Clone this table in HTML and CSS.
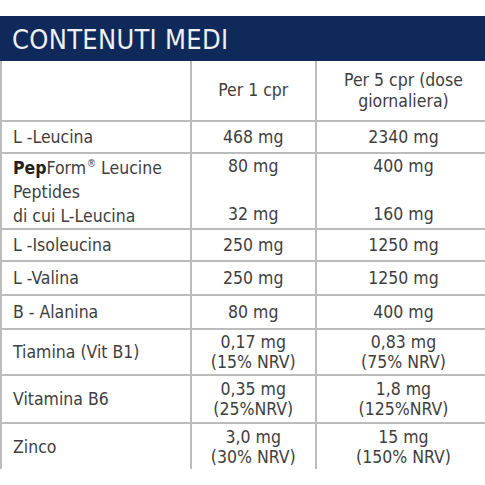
FILE: index.html
```html
<!DOCTYPE html>
<html lang="it">
<head>
  <meta charset="UTF-8" />
  <meta name="viewport" content="width=device-width, initial-scale=1.0"/>
  <title>Contenuti medi</title>
  <link rel="stylesheet" href="styles.css">
</head>
<body>
  <div class="panel">
    <h1 class="panel-title">CONTENUTI MEDI</h1>

    <table class="nutri">
      <colgroup>
        <col class="col-name">
        <col class="col-one">
        <col class="col-five">
      </colgroup>
      <tr class="row-head">
        <td></td>
        <td class="val">Per 1 cpr</td>
        <td class="val">Per 5 cpr (dose<br>giornaliera)</td>
      </tr>
      <tr class="row-s">
        <td>L -Leucina</td>
        <td class="val">468 mg</td>
        <td class="val">2340 mg</td>
      </tr>
      <tr class="row-pep">
        <td><b>Pep</b>Form<sup>&reg;</sup> Leucine<br>Peptides<br>di cui L-Leucina</td>
        <td class="val">80 mg<br>&nbsp;<br>32 mg</td>
        <td class="val">400 mg<br>&nbsp;<br>160 mg</td>
      </tr>
      <tr class="row-s">
        <td>L -Isoleucina</td>
        <td class="val">250 mg</td>
        <td class="val">1250 mg</td>
      </tr>
      <tr class="row-m">
        <td>L -Valina</td>
        <td class="val">250 mg</td>
        <td class="val">1250 mg</td>
      </tr>
      <tr class="row-m">
        <td>B - Alanina</td>
        <td class="val">80 mg</td>
        <td class="val">400 mg</td>
      </tr>
      <tr class="row-l">
        <td>Tiamina (Vit B1)</td>
        <td class="val">0,17 mg<br>(15% NRV)</td>
        <td class="val">0,83 mg<br>(75% NRV)</td>
      </tr>
      <tr class="row-xl">
        <td>Vitamina B6</td>
        <td class="val">0,35 mg<br>(25%NRV)</td>
        <td class="val">1,8 mg<br>(125%NRV)</td>
      </tr>
      <tr class="row-l last">
        <td>Zinco</td>
        <td class="val">3,0 mg<br>(30% NRV)</td>
        <td class="val">15 mg<br>(150% NRV)</td>
      </tr>
    </table>
  </div>
</body>
</html>
```

FILE: styles.css
```css
html, body {
  margin: 0;
  background-color: #fff;
  overflow: hidden;
}

body {
  font-family: 'DejaVu Sans Condensed', 'DejaVu Sans', sans-serif;
  color: #3e3e3e;
}

.panel {
  padding-top: 16px;
  width: 492px;
}

.panel-title {
  margin: 0;
  height: 45px;
  line-height: 47px;
  padding-left: 12px;
  background-color: #0f2a5a;
  color: #eef0f4;
  font-size: 27px;
  font-weight: normal;
  letter-spacing: 0.3px;
}

.nutri {
  border-collapse: collapse;
  width: 492px;
  font-size: 17.5px;
  line-height: 20px;
}

.col-name { width: 190px; }
.col-one { width: 126px; }
.col-five { width: 176px; }

.nutri td {
  border: 2px solid #bcbcbc;
  padding: 0 0 0 11px;
  vertical-align: middle;
  white-space: nowrap;
}

.nutri td.val {
  text-align: center;
  padding: 0;
}

.nutri tr:first-child td {
  border-top: none;
}

.nutri tr.last td {
  border-bottom: none;
}

.row-head { height: 60px; }
.row-head td { padding-top: 4px; line-height: 21px; }
.row-s { height: 32px; }
.row-m { height: 34px; }
.row-l { height: 46px; }
.row-xl { height: 48px; }

.row-pep { height: 75px; }
.row-pep td {
  vertical-align: top;
  line-height: 24px;
  padding-top: 2px;
}

.row-pep b {
  color: #222;
}

.row-pep sup {
  font-size: 10px;
  line-height: 0;
  vertical-align: 7px;
  margin-left: 1px;
}
```
